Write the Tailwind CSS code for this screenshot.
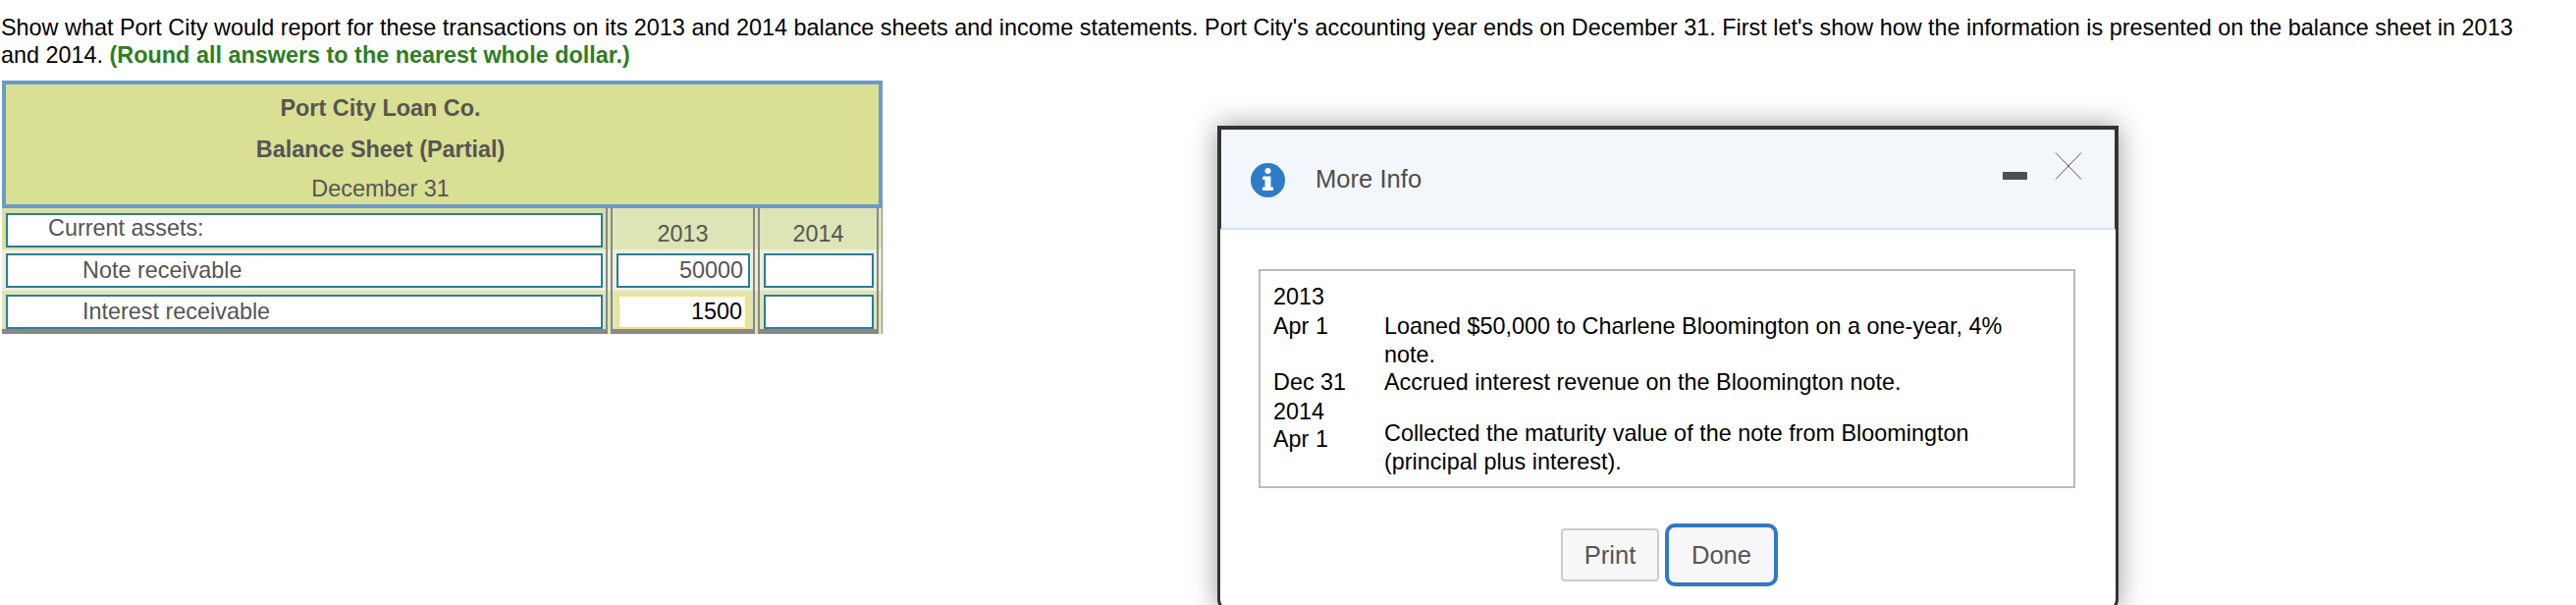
<!DOCTYPE html>
<html lang="en">
<head>
    <meta charset="UTF-8">
    <title>More Info</title>
    <script src="https://cdn.jsdelivr.net/npm/@tailwindcss/browser@4"></script>
</head>
<body class="relative h-[616px] w-[2624px] overflow-hidden bg-white font-['Liberation_Sans',Arial,sans-serif] text-[23.400px] text-black">
    <p class="pl-[1px] pt-[14px] leading-[28px]">Show what Port City would report for these transactions on its 2013 and 2014 balance sheets and income statements. Port City's accounting year ends on December 31. First let's show how the information is presented on the balance sheet in 2013<br>and 2014. <strong class="text-[#2f7d1e]">(Round all answers to the nearest whole dollar.)</strong></p>

    <!-- balance sheet -->
    <div class="ml-[2px] mt-[12px] w-[897px] text-[#555]">
        <div class="flex h-[130px] flex-col border-4 border-[#6a9ac9] bg-[#d9df93] pr-[126px] text-center">
            <div class="mt-[10px] h-[42px] font-bold leading-[28px]">Port City Loan Co.</div>
            <div class="h-[40px] font-bold leading-[28px]">Balance Sheet (Partial)</div>
            <div class="leading-[28px]">December 31</div>
        </div>

        <div class="grid h-[42px] grid-cols-[617px_147px_123px_1px] gap-x-[3px] bg-[#dde5b6] [&>div]:h-full">
            <div class="border-r-2 border-[#888] bg-[#d9e0a0] pl-[4px] pt-[5px]">
                <div class="h-[35px] w-[608px] border-2 border-[#2f7a9a] bg-white pl-[41px] leading-[27px]">Current assets:</div>
            </div>
            <div class="border-x-2 border-[#888] pt-[12px] text-center leading-[28px]">2013</div>
            <div class="border-x-2 border-[#888] pt-[12px] text-center leading-[28px]">2014</div>
            <div class="bg-[#888]"></div>
        </div>

        <div class="grid h-[42px] grid-cols-[617px_147px_123px_1px] gap-x-[3px] bg-[#eaf0da] [&>div]:h-full">
            <div class="border-r-2 border-[#888] pl-[4px] pt-[4px]">
                <div class="h-[35px] w-[608px] border-2 border-[#2f7a9a] bg-white pl-[76px] leading-[30px]">Note receivable</div>
            </div>
            <div class="border-x-2 border-[#888] pl-[4px] pt-[4px]">
                <div class="h-[35px] w-[136px] border-2 border-[#2f7a9a] bg-white pr-[5px] text-right leading-[30px]">50000</div>
            </div>
            <div class="border-x-2 border-[#888] pl-[4px] pt-[4px]">
                <div class="h-[35px] w-[112px] border-2 border-[#2f7a9a] bg-white"></div>
            </div>
            <div class="bg-[#888]"></div>
        </div>

        <div class="grid h-[44px] grid-cols-[617px_147px_123px_1px] gap-x-[3px] bg-[#dde5b6] [&>div]:h-full">
            <div class="border-r-2 border-b-[5px] border-[#888] pl-[4px] pt-[4px]">
                <div class="h-[35px] w-[608px] border-2 border-[#2f7a9a] bg-white pl-[76px] leading-[30px]">Interest receivable</div>
            </div>
            <div class="border-x-2 border-b-[5px] border-[#888] pl-[5px] pt-[4px]">
                <div class="h-[35px] w-[132px] border-2 border-[#fbdf75] bg-white pr-[3px] text-right leading-[30px] text-black">1500</div>
            </div>
            <div class="border-x-2 border-b-[5px] border-[#888] pl-[4px] pt-[4px]">
                <div class="h-[35px] w-[112px] border-2 border-[#2f7a9a] bg-white"></div>
            </div>
            <div class="bg-[#888]"></div>
        </div>
    </div>

    <!-- more info dialog -->
    <div class="absolute left-[1240px] top-[128px] h-[496px] w-[918px] rounded-b-[14px] border-x-[3px] border-b-[3px] border-t-4 border-[#333] bg-white shadow-[0_0_28px_rgba(0,0,0,0.4)]">
        <div class="flex h-[102px] items-start border-x border-b-2 border-x-[#333] border-b-[#d0e4f5] bg-[#f3f7fc]">
            <svg class="ml-[30px] mt-[34px] h-[35px] w-[35px] shrink-0" viewBox="0 0 35 35">
                <circle cx="17.5" cy="17.5" r="17.5" fill="#2d7cca"/>
                <circle cx="17.5" cy="8" r="3" fill="#fff"/>
                <path d="M12.5 13.5h8v11h2.500v3.500h-11v-3.500h2.500v-7.500h-2.500z" fill="#fff"/>
            </svg>
            <span class="ml-[31px] mt-[36px] text-[25.600px] leading-[28px] text-[#4d4d4d]">More Info</span>
            <div class="ml-auto mr-[28px] mt-[43px] h-[8px] w-[25px] rounded-[1px] bg-[#4f4f4f]"></div>
            <svg class="mr-[33px] mt-[23px] h-[28px] w-[28px] shrink-0" viewBox="0 0 28 28" fill="none" stroke="#555" stroke-width="1">
                <path d="M1 0.500 27 27.500M27 0.500 1 27.500"/>
            </svg>
        </div>

        <div class="ml-[39px] mt-[40px] h-[223px] w-[832px] border-2 border-[#bbb] px-[13px] pt-[12px] leading-[28.500px]">
            <div class="grid grid-cols-[113px_640px]">
                <div class="col-span-2 h-[30px]">2013</div>
                <div>Apr 1</div>
                <div>Loaned $50,000 to Charlene Bloomington on a one-year, 4% note.</div>
                <div>Dec 31</div>
                <div class="h-[30px]">Accrued interest revenue on the Bloomington note.</div>
                <div class="col-span-2 h-[22px]">2014</div>
                <div class="pt-[6px]">Apr 1</div>
                <div>Collected the maturity value of the note from Bloomington (principal plus interest).</div>
            </div>
        </div>

        <div class="ml-[347px] mt-[36px] flex items-center gap-[6px] text-[25.600px] text-[#555]">
            <div class="flex h-[54px] w-[100px] items-center justify-center rounded-[4px] border-2 border-[#ccc] bg-[#f7f7f7]">Print</div>
            <div class="flex h-[64px] w-[115px] items-center justify-center rounded-[10px] border-4 border-[#3079c4] bg-[#f7f7f7]">Done</div>
        </div>
    </div>
</body>
</html>
